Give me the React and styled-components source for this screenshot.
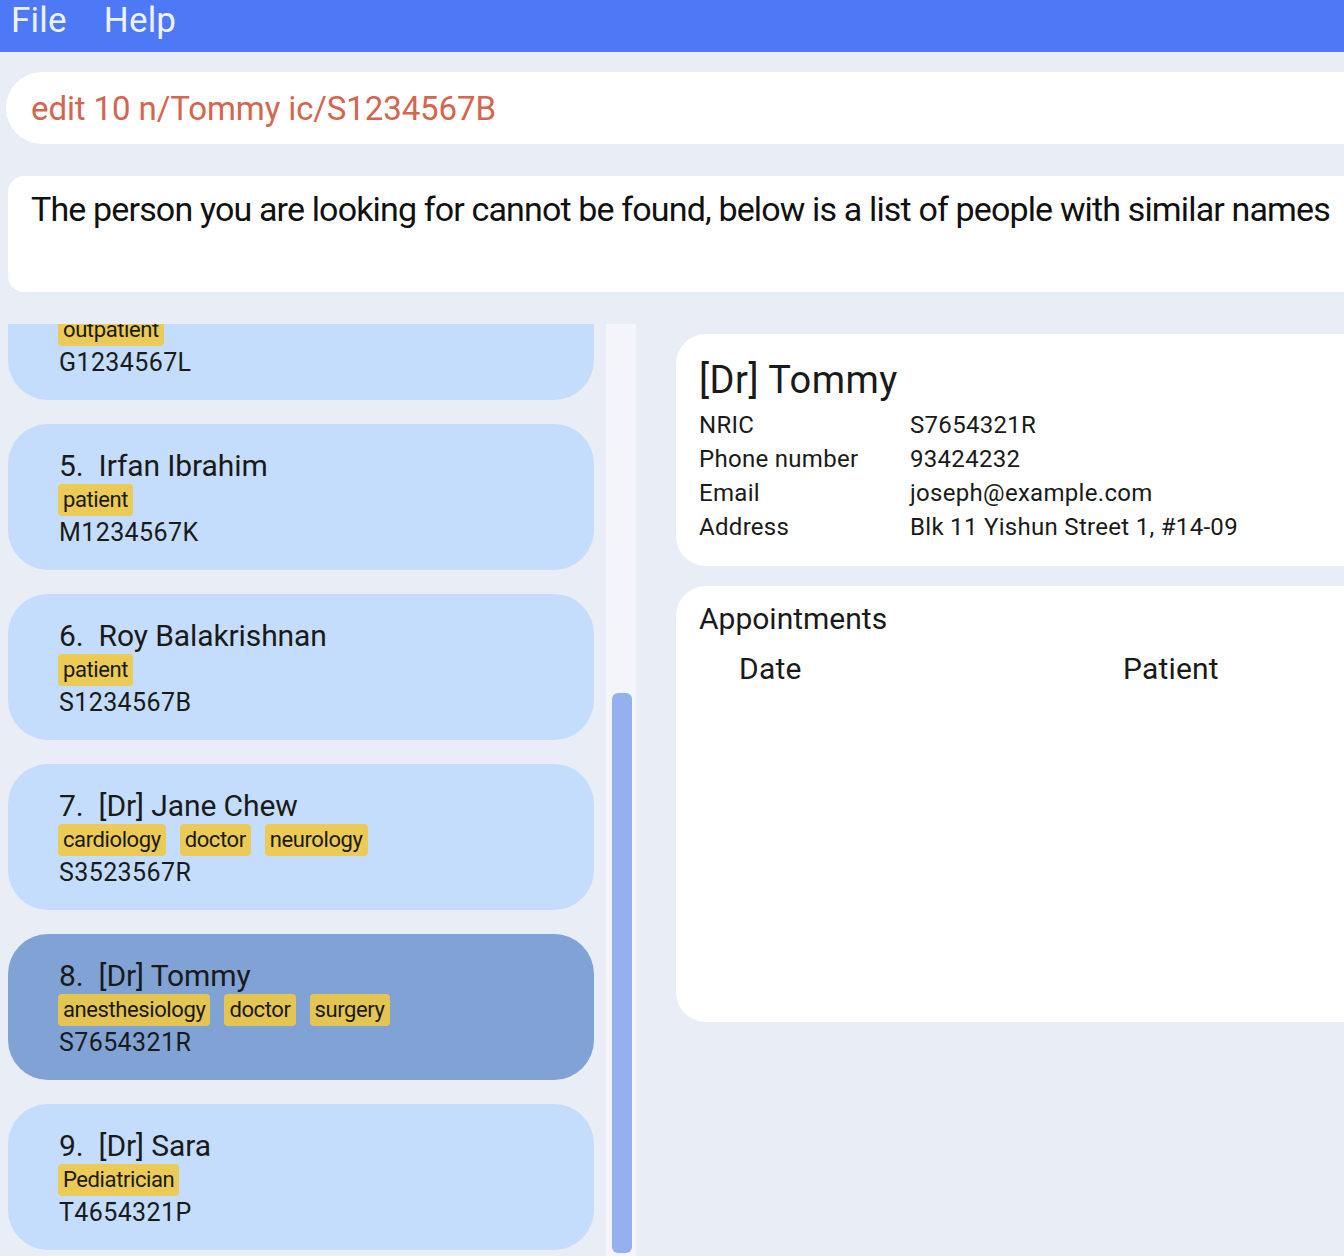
import React, { useLayoutEffect, useRef } from "react";
import styled, { createGlobalStyle } from "styled-components";

const Global = createGlobalStyle`
  html, body { margin: 0; padding: 0; }
  body {
    background: #e8edf6;
    font-family: Roboto, "Liberation Sans", sans-serif;
    color: #1c1c1c;
    overflow: hidden;
  }
  * { box-sizing: border-box; }
`;

const Window = styled.div`
  width: 1344px;
  height: 1256px;
  display: flex;
  flex-direction: column;
  overflow: hidden;
  background: #e8edf6;
`;

const MenuBar = styled.div`
  height: 52px;
  flex: none;
  background: #4d78f6;
  display: flex;
  align-items: center;
  gap: 37px;
  padding-left: 11px;
`;

const MenuItem = styled.span`
  font-size: 35px;
  color: #eef2ff;
  letter-spacing: 0.2px;
  line-height: 40px;
  margin-top: -10px;
`;

const CommandBox = styled.div`
  flex: none;
  margin: 20px 0 0 6px;
  height: 72px;
  background: #fff;
  border-radius: 36px 0 0 36px;
  display: flex;
  align-items: center;
  padding-left: 25px;
  font-size: 33px;
  letter-spacing: -0.1px;
  color: #d4654e;
`;

const ResultBox = styled.div`
  flex: none;
  margin: 32px 0 0 8px;
  height: 116px;
  background: #fff;
  border-radius: 16px 0 0 16px;
  padding: 13px 0 0 23px;
  font-size: 34px;
  line-height: 40px;
  letter-spacing: -0.85px;
  color: #111;
  white-space: nowrap;
`;

const Main = styled.div`
  flex: 1;
  min-height: 0;
  display: flex;
  padding-top: 32px;
`;

const ListColumn = styled.div`
  width: 636px;
  flex: none;
  display: flex;
  gap: 12px;
  padding-left: 8px;
  min-height: 0;
`;

const ListViewport = styled.div`
  width: 586px;
  height: 100%;
  overflow-y: auto;
  scrollbar-width: none;
  &::-webkit-scrollbar { display: none; }
`;

const List = styled.div`
  display: flex;
  flex-direction: column;
  gap: 24px;
  padding-bottom: 24px;
`;

const Card = styled.div`
  height: 146px;
  flex: none;
  border-radius: 40px;
  background: ${(p) => (p.$selected ? "#80a2d5" : "#c4ddfc")};
  padding: 25px 0 0 51px;
  display: flex;
  flex-direction: column;
`;

const Name = styled.div`
  font-size: 30px;
  line-height: 34px;
  letter-spacing: -0.1px;
  color: #1a1a1a;
  white-space: nowrap;
`;

const Index = styled.span`
  margin-right: 15px;
`;

const Tags = styled.div`
  display: flex;
  gap: 14px;
  height: 32px;
  margin-top: 1px;
  margin-left: -1px;
`;

const Tag = styled.span`
  background: ${(p) => (p.$selected ? "#e4c552" : "#ebcb55")};
  border-radius: 4px;
  height: 32px;
  padding: 0 5px;
  font-size: 22px;
  line-height: 32px;
  letter-spacing: -0.4px;
  color: #1a1a1a;
`;

const Nric = styled.div`
  font-size: 25px;
  line-height: 32px;
  margin-top: 1px;
  letter-spacing: 0.4px;
  color: #1a1a1a;
`;

const ScrollTrack = styled.div`
  width: 30px;
  flex: none;
  height: 100%;
  background: #f3f5fa;
  padding: 369px 4px 0 6px;
`;

const ScrollThumb = styled.div`
  width: 20px;
  height: 560px;
  border-radius: 6px;
  background: #94b0ef;
`;

const RightPanel = styled.div`
  flex: 1;
  display: flex;
  flex-direction: column;
  gap: 20px;
  padding: 10px 0 0 40px;
`;

const Panel = styled.div`
  background: #fff;
  border-radius: 30px 0 0 30px;
  height: ${(p) => p.$h}px;
  padding: ${(p) => p.$pad};
`;

const DetailName = styled.div`
  font-size: 38px;
  line-height: 44px;
  letter-spacing: 0.5px;
  color: #1a1a1a;
  margin-bottom: 6px;
`;

const InfoGrid = styled.div`
  display: grid;
  grid-template-columns: 211px 1fr;
  grid-auto-rows: 34px;
  align-items: center;
  font-size: 24px;
  letter-spacing: 0.3px;
  color: #1a1a1a;
`;

const SectionTitle = styled.div`
  font-size: 30px;
  line-height: 36px;
  letter-spacing: 0px;
  color: #1a1a1a;
`;

const TableHead = styled.div`
  display: grid;
  grid-template-columns: 384px 1fr;
  padding-left: 40px;
  margin-top: 14px;
  font-size: 30px;
  line-height: 36px;
  letter-spacing: 0.2px;
  color: #1a1a1a;
`;

const people = [
  { n: 4, name: "Jamie Lim", tags: ["outpatient"], nric: "G1234567L" },
  { n: 5, name: "Irfan Ibrahim", tags: ["patient"], nric: "M1234567K" },
  { n: 6, name: "Roy Balakrishnan", tags: ["patient"], nric: "S1234567B" },
  { n: 7, name: "[Dr] Jane Chew", tags: ["cardiology", "doctor", "neurology"], nric: "S3523567R" },
  { n: 8, name: "[Dr] Tommy", tags: ["anesthesiology", "doctor", "surgery"], nric: "S7654321R", sel: true },
  { n: 9, name: "[Dr] Sara", tags: ["Pediatrician"], nric: "T4654321P" },
  { n: 10, name: "Tommy Tan", tags: ["patient"], nric: "S2234567C" },
];

export default function App() {
  const ref = useRef(null);
  useLayoutEffect(() => {
    if (ref.current) ref.current.scrollTop = 70;
  }, []);
  return (
    <Window>
      <Global />
      <MenuBar>
        <MenuItem>File</MenuItem>
        <MenuItem>Help</MenuItem>
      </MenuBar>
      <CommandBox>edit 10 n/Tommy ic/S1234567B</CommandBox>
      <ResultBox>
        The person you are looking for cannot be found, below is a list of people with similar names
      </ResultBox>
      <Main>
        <ListColumn>
          <ListViewport ref={ref}>
            <List>
              {people.map((p) => (
                <Card key={p.n} $selected={p.sel}>
                  <Name>
                    <Index>{p.n}.</Index>
                    {p.name}
                  </Name>
                  <Tags>
                    {p.tags.map((t) => (
                      <Tag key={t} $selected={p.sel}>{t}</Tag>
                    ))}
                  </Tags>
                  <Nric>{p.nric}</Nric>
                </Card>
              ))}
            </List>
          </ListViewport>
          <ScrollTrack>
            <ScrollThumb />
          </ScrollTrack>
        </ListColumn>
        <RightPanel>
          <Panel $h={232} $pad="24px 0 0 23px">
            <DetailName>[Dr] Tommy</DetailName>
            <InfoGrid>
              <span>NRIC</span>
              <span>S7654321R</span>
              <span>Phone number</span>
              <span>93424232</span>
              <span>Email</span>
              <span>joseph@example.com</span>
              <span>Address</span>
              <span>Blk 11 Yishun Street 1, #14-09</span>
            </InfoGrid>
          </Panel>
          <Panel $h={436} $pad="15px 0 0 23px">
            <SectionTitle>Appointments</SectionTitle>
            <TableHead>
              <span>Date</span>
              <span>Patient</span>
            </TableHead>
          </Panel>
        </RightPanel>
      </Main>
    </Window>
  );
}
